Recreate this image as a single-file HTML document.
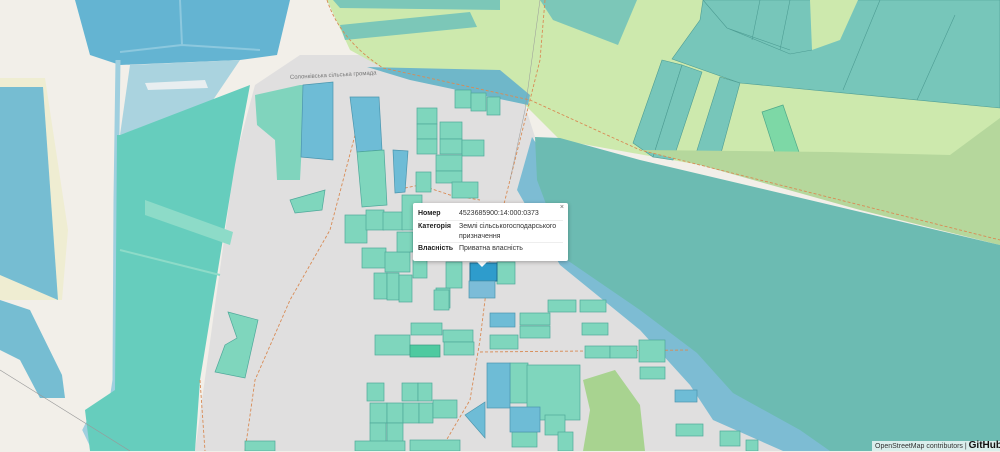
<!DOCTYPE html>
<html><head><meta charset="utf-8"><style>
html,body{margin:0;padding:0;width:1000px;height:451px;overflow:hidden;background:#f2efe9;font-family:"Liberation Sans","Noto Sans CJK SC",sans-serif}
svg{position:absolute;left:0;top:0}
.p{fill:#7fd6bd;stroke:#4fa89a;stroke-width:.7}
.b{fill:#6ebcd6;stroke:#4b95ad;stroke-width:.7}
.popup{position:absolute;left:413px;top:203px;width:155px;height:58px;background:#fff;box-shadow:0 1px 4px rgba(0,0,0,.3);border-radius:2px;font-size:7px;color:#333}
.popup .x{position:absolute;right:4px;top:1px;font-size:7px;color:#666}
.t{position:absolute;white-space:nowrap;line-height:9px}
.t.k{left:5px;font-weight:bold;color:#222}
.t.v{left:46px}
.hr{position:absolute;left:5px;right:5px;height:1px;background:#eee}
.attr{position:absolute;left:872px;top:441px;width:128px;height:10px;background:rgba(255,255,255,.75);font-size:7px;color:#333;line-height:10px;padding-left:3px;white-space:nowrap}
.attr b{font-size:10px;color:#111}
</style></head><body>
<svg width="1000" height="451" viewBox="0 0 1000 451">
<polygon fill="#e0dfdf" points="300,55 375,55 520,90 535,137 517,190 560,265 640,330 700,385 783,451 195,451 235,160 255,85"/>
<polygon fill="#cde9ad" points="327,0 1000,0 1000,245 700,165 560,140 520,100 500,78 383,68 350,50"/>
<polygon fill="#7cc7b8" points="333,0 500,0 500,10 340,8"/>
<polygon fill="#7cc7b8" points="340,25 470,12 477,27 345,40"/>
<polygon fill="#7cc7b8" points="540,0 637,0 618,45 553,20"/>
<polygon fill="#77c6ba" stroke="#4d9c93" stroke-width=".6" points="703,0 1000,0 1000,108 740,83 672,59 700,20"/>
<polygon fill="#cde9ad" points="810,0 858,0 840,40 812,50"/>
<path d="M703,0 L727,28 L790,50 M760,0 L752,40 M790,0 L780,50 M880,0 L843,90 M955,15 L917,100 M727,28 L790,54 L812,50" stroke="#4d9c93" stroke-width=".6" fill="none"/>
<polygon fill="#77c6ba" stroke="#4d9c93" stroke-width=".6" points="662,60 682,65 653,157 633,143"/>
<polygon fill="#77c6ba" stroke="#4d9c93" stroke-width=".6" points="682,65 702,72 673,160 653,157"/>
<polygon fill="#77c6ba" stroke="#4d9c93" stroke-width=".6" points="720,77 740,83 717,168 693,163"/>
<polygon fill="#7dd8a6" stroke="#4fa889" stroke-width=".7" points="762,112 783,105 801,158 779,165"/>
<polygon fill="#b5d79c" points="640,150 830,152 950,155 1000,118 1000,245 860,210 700,165"/>
<polygon fill="#6fb7c9" points="367,67 500,70 530,95 528,105 410,80"/>
<polygon fill="#7dbcd3" points="532,137 560,180 700,300 900,451 783,451 713,420 690,385 640,330 560,265 517,190"/>
<polygon fill="#6cbbb2" points="535,137 560,138 640,160 1000,245 1000,451 830,451 800,430 733,393 697,353 640,310 567,260 537,180"/>
<polygon fill="#a8d390" points="583,380 615,370 640,405 645,451 583,451 590,410"/>
<polygon fill="#64b4d2" points="75,0 290,0 277,55 240,60 120,65 90,55"/>
<path d="M180,0 L182,45 L120,52 M182,45 L260,50" stroke="#8cc8de" stroke-width="2" fill="none"/>
<polygon fill="#aad3df" points="130,65 240,60 213,100 120,135"/>
<polygon fill="#e8eef0" points="145,83 205,80 208,88 148,90"/>
<path d="M118,60 L116,200 L115,380 L112,400 L95,410 L85,430 L95,451" stroke="#9fcfdf" stroke-width="5" fill="none"/>
<polygon fill="#66cdbd" points="120,135 250,85 235,165 200,380 195,451 90,451 85,410 115,390 117,135"/>
<polygon fill="#8ddbc8" points="145,200 233,232 230,245 145,215"/>
<path d="M120,250 L220,275" stroke="#8ddbc8" stroke-width="2"/>
<polygon fill="#80d4bd" points="255,95 300,85 305,85 300,180 277,180 275,140 257,125"/>
<polygon class="b" points="303,85 333,82 333,160 301,157"/>
<polygon fill="#efedd2" points="0,78 45,78 68,230 62,300 0,300"/>
<polygon fill="#76bdd2" points="0,87 43,87 58,300 0,275"/>
<polygon fill="#76bdd2" points="0,300 30,310 62,375 65,398 40,398 20,360 0,350"/>
<path d="M0,370 L130,451" stroke="#999" stroke-width=".6"/>
<g stroke="#d88b55" stroke-width=".9" stroke-dasharray="3,2" fill="none">
<path d="M327,0 Q340,40 383,68 L530,100 L640,150 L1000,240"/>
<path d="M355,135 L330,230 L290,300 L255,380 L245,451"/>
<path d="M545,0 L540,60 L520,140 L490,260 L480,340 L470,400 L440,451"/>
<path d="M395,190 L420,185 L450,195 L480,200"/>
<path d="M480,352 L690,350"/>
<path d="M200,380 L205,451"/>
</g>
<path d="M540,0 L525,110 L510,180" stroke="#999" stroke-width=".5" fill="none"/>
<text x="290" y="79" font-size="6" fill="#777" transform="rotate(-3 290 79)">Солонківська сільська громада</text>
<polygon class="b" points="350,97 379,97 382,150 357,152"/>
<polygon class="p" points="357,152 384,150 387,205 362,207"/>
<polygon class="b" points="393,150 408,151 405,192 395,193"/>
<polygon class="p" points="290,200 325,190 322,210 295,213"/>
<polygon class="p" points="228,312 258,320 245,378 215,372 225,345 237,338"/>
<g class="p">
<rect x="455" y="90" width="16" height="18"/><rect x="471" y="93" width="15" height="18"/><rect x="487" y="97" width="13" height="18"/>
<rect x="417" y="108" width="20" height="16"/><rect x="417" y="124" width="20" height="15"/><rect x="417" y="139" width="20" height="15"/>
<rect x="440" y="122" width="22" height="17"/><rect x="440" y="139" width="22" height="15"/><rect x="462" y="140" width="22" height="16"/>
<rect x="436" y="155" width="26" height="16"/><rect x="436" y="171" width="26" height="12"/><rect x="452" y="182" width="26" height="16"/><rect x="416" y="172" width="15" height="20"/>
<rect x="345" y="215" width="22" height="28"/><rect x="366" y="210" width="18" height="20"/><rect x="383" y="212" width="20" height="18"/><rect x="402" y="195" width="20" height="35"/>
<rect x="362" y="248" width="24" height="20"/><rect x="385" y="252" width="25" height="20"/><rect x="397" y="232" width="16" height="20"/>
<rect x="374" y="273" width="13" height="26"/><rect x="387" y="273" width="12" height="27"/><rect x="399" y="275" width="13" height="27"/>
<rect x="413" y="260" width="14" height="18"/><rect x="436" y="288" width="14" height="20"/><rect x="446" y="262" width="16" height="26"/><rect x="497" y="262" width="18" height="22"/>
<rect x="434" y="290" width="15" height="20"/>
<rect x="520" y="313" width="30" height="12"/><rect x="548" y="300" width="28" height="12"/><rect x="580" y="300" width="26" height="12"/><rect x="520" y="326" width="30" height="12"/><rect x="582" y="323" width="26" height="12"/>
<rect x="490" y="335" width="28" height="14"/><rect x="411" y="323" width="31" height="12"/><rect x="443" y="330" width="30" height="12"/><rect x="375" y="335" width="35" height="20"/>
<rect x="444" y="342" width="30" height="13"/><rect x="585" y="346" width="25" height="12"/><rect x="610" y="346" width="27" height="12"/><rect x="639" y="340" width="26" height="22"/><rect x="640" y="367" width="25" height="12"/>
<rect x="510" y="363" width="18" height="40"/><rect x="527" y="365" width="53" height="55"/><rect x="545" y="415" width="20" height="20"/><rect x="512" y="432" width="25" height="15"/><rect x="558" y="432" width="15" height="19"/>
<rect x="367" y="383" width="17" height="18"/><rect x="402" y="383" width="16" height="18"/><rect x="418" y="383" width="14" height="18"/>
<rect x="370" y="403" width="17" height="20"/><rect x="387" y="403" width="16" height="20"/><rect x="403" y="403" width="16" height="20"/><rect x="419" y="403" width="14" height="20"/><rect x="433" y="400" width="24" height="18"/>
<rect x="370" y="423" width="16" height="20"/><rect x="387" y="423" width="16" height="20"/><rect x="355" y="441" width="50" height="10"/><rect x="410" y="440" width="50" height="11"/><rect x="245" y="441" width="30" height="10"/>
<rect x="676" y="424" width="27" height="12"/><rect x="720" y="431" width="20" height="15"/><rect x="746" y="440" width="12" height="11"/>
</g>
<rect x="410" y="345" width="30" height="12" fill="#4fcaa0" stroke="#3a9a80" stroke-width=".7"/>
<g class="b">
<rect x="490" y="313" width="25" height="14"/><rect x="487" y="363" width="23" height="45"/><rect x="510" y="407" width="30" height="25"/><rect x="675" y="390" width="22" height="12"/>
<polygon points="465,415 485,402 485,438"/>
</g>
<rect x="470" y="263" width="27" height="18" fill="#2e9ccc" stroke="#1e6e92" stroke-width="1"/>
<rect x="469" y="281" width="26" height="17" fill="#7cbcd8" stroke="#4b95ad" stroke-width=".7"/>
<polygon points="476,261 488,261 482,267" fill="#fff"/>
</svg>
<div class="popup">
<div class="x">×</div>
<div class="t k" style="top:6px">Номер</div><div class="t v" style="top:6px">4523685900:14:000:0373</div>
<div class="hr" style="top:17px"></div>
<div class="t k" style="top:19px">Категорія</div><div class="t v" style="top:19px">Землі сільськогосподарського</div>
<div class="t v" style="top:29px">призначення</div>
<div class="hr" style="top:39px"></div>
<div class="t k" style="top:41px">Власність</div><div class="t v" style="top:41px">Приватна власність</div>
</div>
<div class="attr">OpenStreetMap contributors | <b>GitHub</b></div>
</body></html>
